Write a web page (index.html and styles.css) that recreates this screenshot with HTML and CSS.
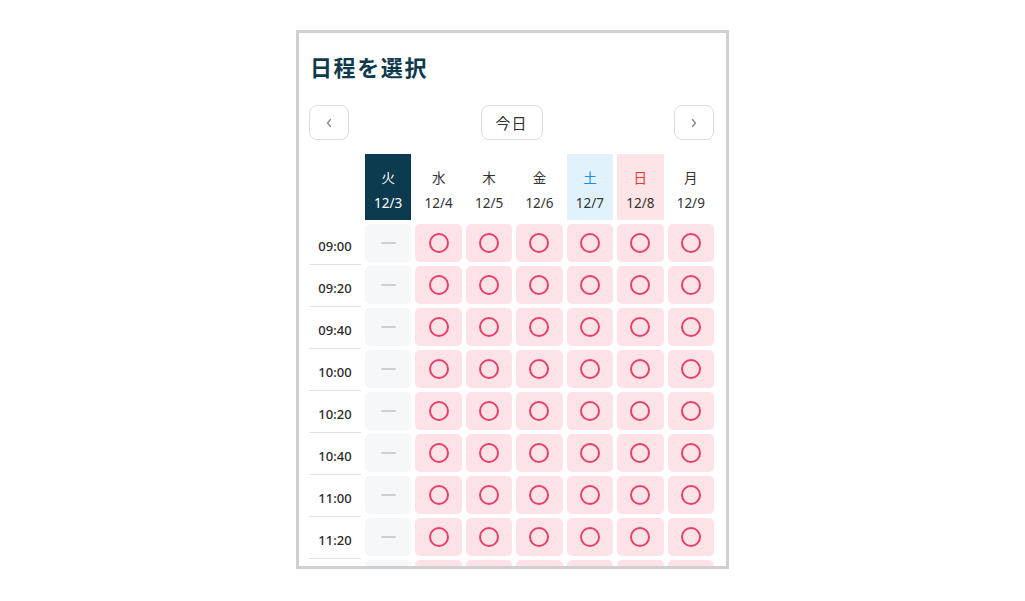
FILE: index.html
```html
<!DOCTYPE html>
<html lang="ja">
<head>
<meta charset="utf-8">
<title>日程を選択</title>
<link rel="stylesheet" href="styles.css">
</head>
<body>
<div class="frame">
  <h1 class="title">日程を選択</h1>
  <div class="nav">
    <button class="btn icon-btn" aria-label="前へ"><svg width="8" height="12" viewBox="0 0 8 12"><path d="M5.5 2.5 L2.5 6 L5.5 9.5" fill="none" stroke="#888" stroke-width="1.3" stroke-linecap="round" stroke-linejoin="round"/></svg></button>
    <button class="btn today">今日</button>
    <button class="btn icon-btn" aria-label="次へ"><svg width="8" height="12" viewBox="0 0 8 12"><path d="M2.5 2.5 L5.5 6 L2.5 9.5" fill="none" stroke="#888" stroke-width="1.3" stroke-linecap="round" stroke-linejoin="round"/></svg></button>
  </div>
  <div class="grid" id="grid">
    <div class="corner"></div>
    <div class="day selected"><span class="wd">火</span><span class="dt">12/3</span></div>
    <div class="day"><span class="wd">水</span><span class="dt">12/4</span></div>
    <div class="day"><span class="wd">木</span><span class="dt">12/5</span></div>
    <div class="day"><span class="wd">金</span><span class="dt">12/6</span></div>
    <div class="day sat"><span class="wd">土</span><span class="dt">12/7</span></div>
    <div class="day sun"><span class="wd">日</span><span class="dt">12/8</span></div>
    <div class="day"><span class="wd">月</span><span class="dt">12/9</span></div>
  </div>
</div>
<script>
(function(){
  var g=document.getElementById('grid');
  var times=['09:00','09:20','09:40','10:00','10:20','10:40','11:00','11:20',''];
  var html='';
  times.forEach(function(t){
    html+='<div class="time">'+t+'</div>';
    html+='<div class="cell na"><span class="dash"></span></div>';
    for(var i=0;i<6;i++){html+='<div class="cell ok"><span class="ring"></span></div>';}
  });
  g.insertAdjacentHTML('beforeend',html);
})();
</script>
</body>
</html>
```
FILE: styles.css
```css
* { box-sizing: border-box; }
html, body { margin: 0; padding: 0; background: #fff; }
body {
  font-family: "Noto Sans", "Noto Sans CJK JP", sans-serif;
  color: #333;
}
.frame {
  width: 433px;
  height: 539px;
  margin: 30px auto 0;
  border: 3px solid #d0d0d0;
  padding: 19px 12px 0 10px;
  overflow: hidden;
  background: #fff;
}
.title {
  margin: 0 0 23px 1px;
  font-size: 22px;
  line-height: 30px;
  font-weight: 700;
  color: #0f3a4e;
  letter-spacing: 1.6px;
}
.nav {
  display: flex;
  justify-content: space-between;
  align-items: center;
  height: 35px;
  margin-bottom: 14px;
}
.btn {
  background: #fff;
  border: 1px solid #dcdcdc;
  border-radius: 8px;
  height: 35px;
  padding: 0;
  display: flex;
  align-items: center;
  justify-content: center;
  font-family: inherit;
  color: #333;
}
.icon-btn { width: 40px; }
.today { width: 62px; font-size: 15px; letter-spacing: 1px; }
.grid {
  display: grid;
  grid-template-columns: 52px repeat(7, 1fr);
  grid-auto-rows: 38px;
  grid-template-rows: 66px;
  gap: 4px;
}
.day {
  display: flex;
  flex-direction: column;
  align-items: center;
  justify-content: center;
  gap: 5px;
  font-size: 13.5px;
  line-height: 20px;
  color: #333;
  padding-top: 7px;
}
.day.selected { background: #0c3a4f; color: #fff; }
.day.sat { background: #e2f2fd; }
.day.sat .wd { color: #1a8fdc; }
.day.sun { background: #fde4e6; }
.day.sun .wd { color: #e53935; }
.time {
  display: flex;
  align-items: center;
  justify-content: center;
  font-size: 13px;
  font-weight: 500;
  color: #2a2a2a;
  border-bottom: 1px solid #e2e2e2;
  margin-bottom: -3px;
  padding-top: 3px;
}
.cell {
  border-radius: 5px;
  display: flex;
  align-items: center;
  justify-content: center;
}
.cell.na { background: #f6f7f8; }
.cell.ok { background: #fde3e7; }
.dash {
  width: 15px;
  height: 2px;
  background: #cfcfd2;
  border-radius: 1px;
}
.ring {
  width: 20px;
  height: 20px;
  border: 2px solid #e6406a;
  border-radius: 50%;
}
```
